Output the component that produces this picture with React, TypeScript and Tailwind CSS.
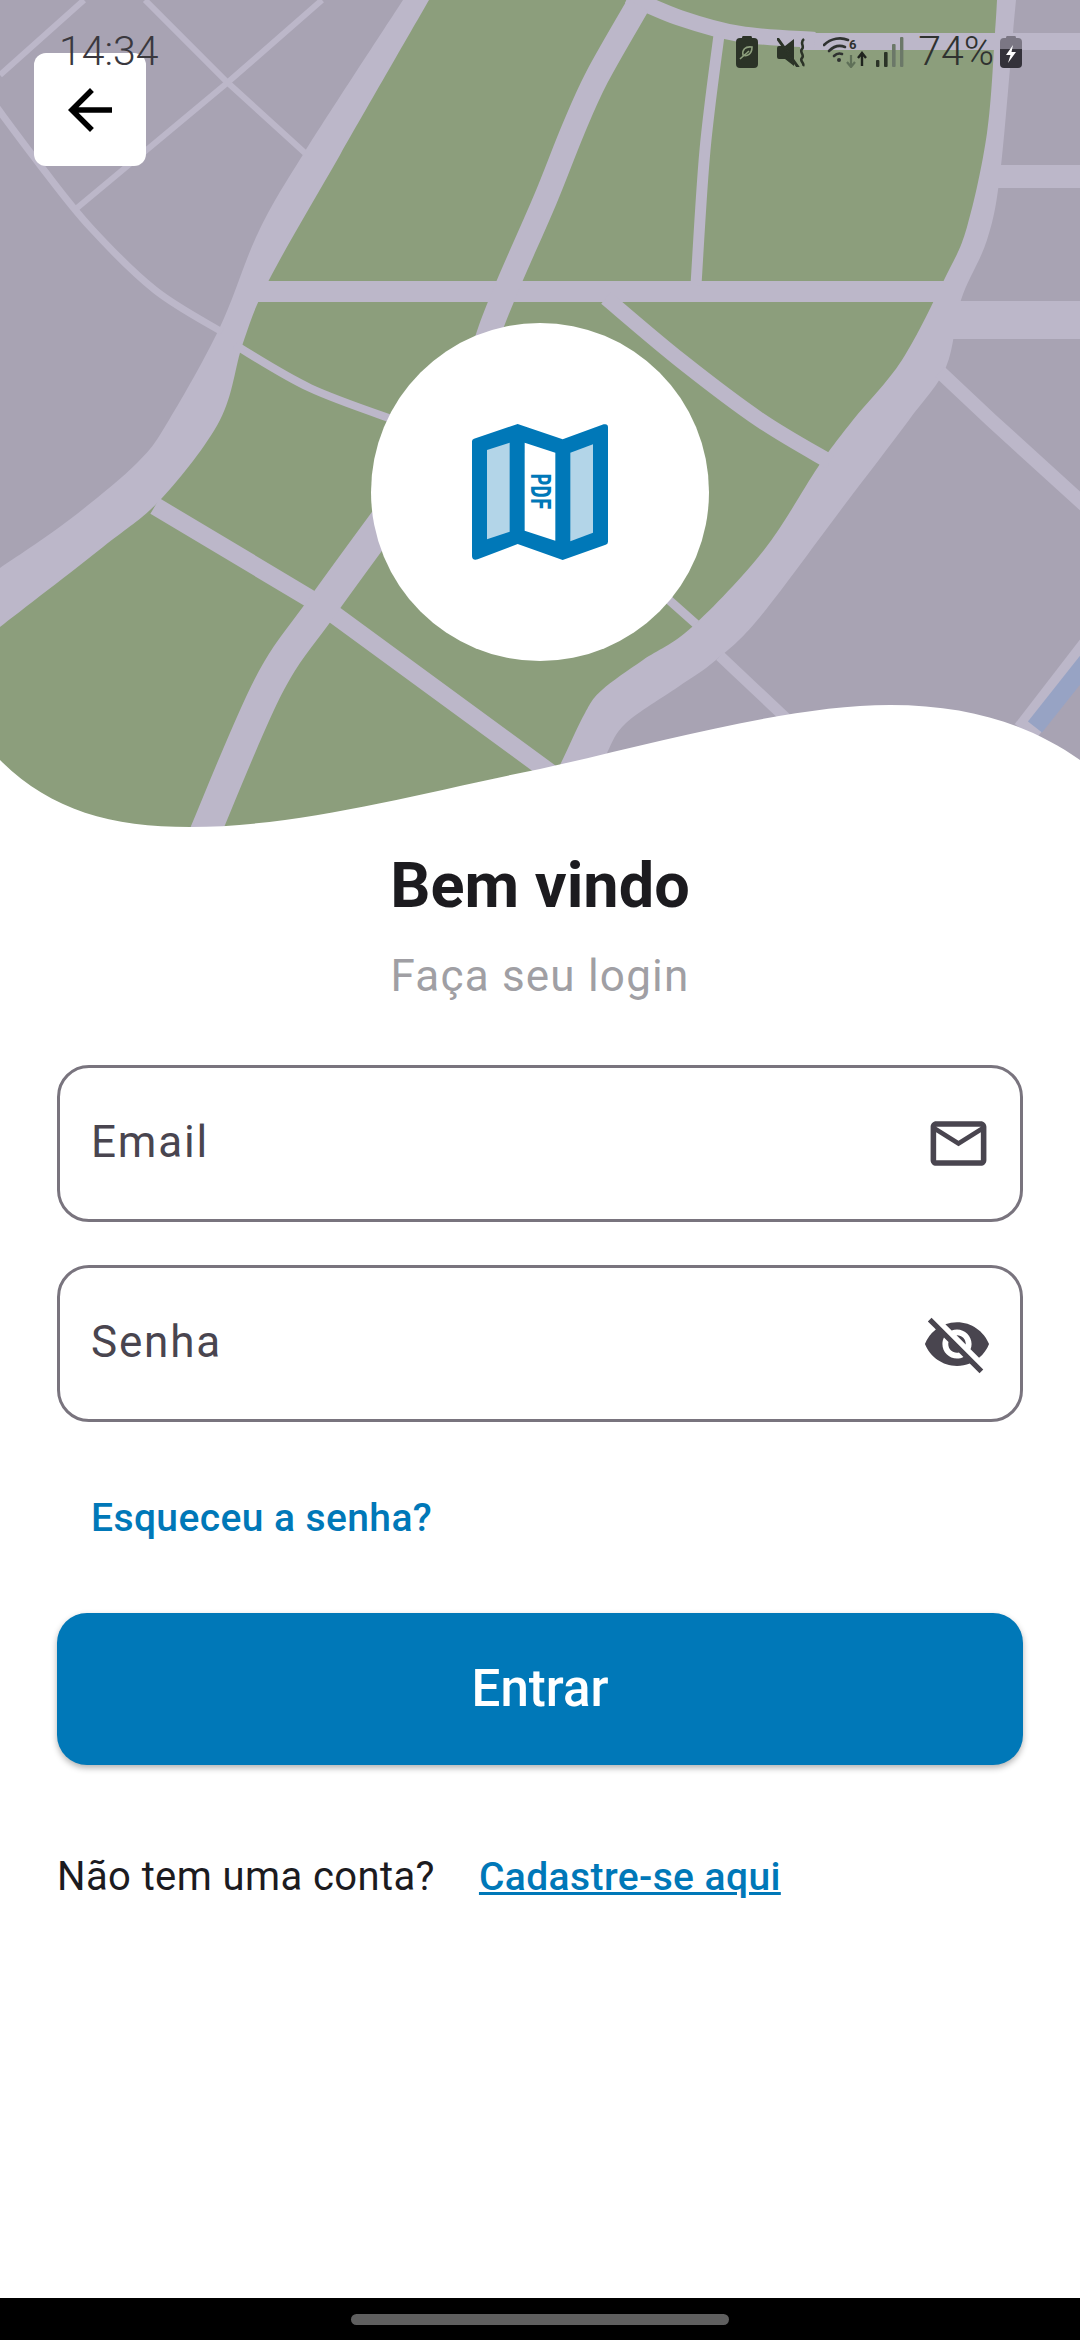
import { MdArrowBack, MdMailOutline, MdVisibilityOff } from 'react-icons/md';

const roboto = "font-['Roboto',sans-serif]";

type Pt = [number, number];

// catmull-rom through the points, so the road edges don't look faceted
function curve(pts: Pt[], cmd = 'M') {
  let d = `${cmd}${pts[0][0]} ${pts[0][1]}`;
  for (let i = 0; i < pts.length - 1; i++) {
    const p0 = pts[i - 1] ?? pts[i];
    const p1 = pts[i];
    const p2 = pts[i + 1];
    const p3 = pts[i + 2] ?? p2;
    const c1x = p1[0] + (p2[0] - p0[0]) / 6;
    const c1y = p1[1] + (p2[1] - p0[1]) / 6;
    const c2x = p2[0] - (p3[0] - p1[0]) / 6;
    const c2y = p2[1] - (p3[1] - p1[1]) / 6;
    d += ` C${c1x} ${c1y} ${c2x} ${c2y} ${p2[0]} ${p2[1]}`;
  }
  return d;
}

const leftRoadA: Pt[] = [[403, 0], [304, 153], [258, 233], [220, 327], [169, 420], [137, 463], [69, 520], [0, 568]];
const leftRoadB: Pt[] = [[0, 627], [103, 547], [162, 498], [220, 420], [243, 343], [269, 280], [340, 155], [429, 0]];
const rightRoadA: Pt[] = [[997, 0], [995, 33], [987, 133], [967, 227], [945, 278], [902, 360], [853, 420], [818, 467], [764, 550], [692, 627], [643, 660], [602, 690], [585, 713], [561, 763], [545, 795]];
const rightRoadB: Pt[] = [[590, 795], [607, 753], [626, 723], [678, 687], [716, 660], [760, 617], [843, 507], [909, 420], [946, 367], [961, 300], [987, 240], [1000, 175], [1013, 33], [1016, 0]];

function MapBackdrop() {
  return (
    <svg viewBox="0 0 1080 830" className="block w-[1080px] h-[830px]">
      <rect width="1080" height="830" fill="#a8a3b3" />
      {/* park area between the two main roads */}
      <path
        d="M416 0 L1006 0 L990 133 L975 235 L950 290 L880 405 L800 530 L725 625 L660 675 L610 705 L585 770 L560 830 L0 830 L0 597 L85 535 L150 480 L195 420 L230 335 L285 215 Z"
        fill="#8c9e7c"
      />
      <g fill="#bcb7c9">
        <path d={`${curve(leftRoadA)} ${curve(leftRoadB, 'L')} Z`} />
        <path d={`${curve(rightRoadA)} ${curve(rightRoadB, 'L')} Z`} />
        <rect x="255" y="281" width="690" height="21" />
        <rect x="945" y="301" width="135" height="38" />
        <rect x="990" y="165" width="90" height="23" />
        <rect x="800" y="33" width="280" height="17" />
      </g>
      <g fill="none" stroke="#bcb7c9" strokeLinecap="butt">
        <path d={curve([[628, -4], [680, 18], [740, 34], [815, 40]])} strokeWidth="16" />
        <path d={curve([[638, 5], [597, 77], [573, 130], [545, 200], [510, 280], [490, 330], [478, 370]])} strokeWidth="24" />
        <path d={curve([[719, 35], [705, 150], [696, 285]])} strokeWidth="11" />
        <path d={curve([[606, 298], [680, 360], [760, 420], [830, 462]])} strokeWidth="15" />
        <path d={curve([[235, 345], [310, 388], [400, 422]])} strokeWidth="8" />
        <path d="M155 506 L309 598 L336 616 L560 780" strokeWidth="18" />
        <path d={curve([[400, 500], [322, 607], [268, 687], [204, 835]])} strokeWidth="31" />
        <path d="M660 592 L696 624" strokeWidth="9" />
        <path d="M720 656 L790 722" strokeWidth="11" />
        <path d="M940 372 L991 420 L1090 510" strokeWidth="14" />
        <path d="M84 0 L0 75" strokeWidth="6" />
        <path d="M145 0 L227 82 L305 153" strokeWidth="6" />
        <path d="M322 0 L227 83 L77 208" strokeWidth="6" />
        <path d={curve([[-5, 105], [40, 165], [90, 227], [155, 290], [222, 332]])} strokeWidth="7" />
        <path d="M1025 732 L1096 640" strokeWidth="26" />
      </g>
      <path d="M1035 727 L1096 650" fill="none" stroke="#97a3c4" strokeWidth="18" />
      {/* white wave that cuts the map off */}
      <path
        d="M0 760 C 50 810, 110 827, 190 827 C 300 827, 420 793, 540 769 C 660 742, 790 705, 890 705 C 970 705, 1030 725, 1080 760 L1080 831 L0 831 Z"
        fill="#ffffff"
      />
    </svg>
  );
}

function PdfMapLogo() {
  return (
    <svg viewBox="95 72 408 408" className="w-[136px] h-[136px]">
      <path
        d="M101 116 L232 72 L367 118 L490 73 Q503 70 503 82 L503 425 Q503 432 496 434 L367 480 L232 432 L112 478 Q95 482 95 468 L95 124 Q95 118 101 116 Z"
        fill="#0078b8"
      />
      <path d="M140 150 L208 128 L208 395 L140 418 Z" fill="#b3d5e8" />
      <path d="M253 128 L345 158 L345 422 L253 392 Z" fill="#ffffff" />
      <path d="M390 158 L458 133 L458 398 L390 424 Z" fill="#b3d5e8" />
      <text
        x="0"
        y="0"
        transform="translate(272 220) rotate(90)"
        fontFamily="'DejaVu Sans Mono', monospace"
        fontSize="78"
        fontWeight="700"
        textLength="110"
        lengthAdjust="spacingAndGlyphs"
        fill="#0078b8"
      >
        PDF
      </text>
    </svg>
  );
}

function LeafBattery() {
  return (
    <svg viewBox="0 0 22 32" className="w-[22px] h-[32px]">
      <path d="M7 0 H15 Q16 0 16 2 H18 Q22 2 22 6 V28 Q22 32 18 32 H4 Q0 32 0 28 V6 Q0 2 4 2 H6 Q6 0 7 0 Z" fill="#2b3327" />
      <path d="M16 11 C 9 10, 6 14, 7 19 C 11 21, 16 18, 16 11 Z" fill="none" stroke="#8d9f7d" strokeWidth="1.6" />
      <path d="M4 23 C 7 20, 10 18, 13 15" fill="none" stroke="#8d9f7d" strokeWidth="1.6" />
    </svg>
  );
}

function MutedVibrate() {
  return (
    <svg viewBox="0 0 29 29" className="w-[29px] h-[29px]">
      <path d="M0 10 Q0 8 2 8 H8 L17 1 V28 L8 21 H2 Q0 21 0 19 Z" fill="#2b3327" />
      <path d="M0 -1 L20 28" stroke="#a4ab9a" strokeWidth="1.6" />
      <path d="M1 1 L21 29" stroke="#2b3327" strokeWidth="3" strokeLinecap="round" />
      <path d="M27 1 C 22 5, 28 8, 25 11 C 22 14, 28 17, 25 20 C 22 23, 28 25, 26 28" fill="none" stroke="#2b3327" strokeWidth="2.6" />
    </svg>
  );
}

function WifiSix() {
  return (
    <svg viewBox="0 0 44 32" className="w-[44px] h-[32px]">
      <g fill="none" stroke="#2f3230" strokeWidth="2.6" strokeLinecap="round">
        <path d="M1 9 C 8 2, 18 1, 25 4" />
        <path d="M6 15 C 11 10, 17 9, 22 11" />
        <path d="M11 20 C 13 18, 16 17, 19 18" />
      </g>
      <circle cx="16" cy="24" r="2" fill="#2f3230" />
      <text x="26" y="13" fontFamily="Roboto, sans-serif" fontSize="13" fontWeight="700" fill="#2f3230">
        6
      </text>
      <path d="M28 19 V30 M24 26 L28 31 L32 26" fill="none" stroke="#5f7058" strokeWidth="2.2" />
      <path d="M39 30 V18 M35 22 L39 17 L43 22" fill="none" stroke="#1f241e" strokeWidth="2.4" />
    </svg>
  );
}

function SignalBars() {
  return (
    <svg viewBox="0 0 28 30" className="w-[28px] h-[30px]">
      <rect x="0" y="23" width="3.4" height="7" rx="1" fill="#2b3327" />
      <rect x="8" y="15" width="3.6" height="15" rx="1" fill="#2b3327" />
      <rect x="16" y="7" width="3.6" height="23" rx="1" fill="#6b7868" />
      <rect x="24" y="0" width="3.4" height="30" rx="1" fill="#6b7868" />
    </svg>
  );
}

function ChargingBattery() {
  return (
    <svg viewBox="0 0 22 32" className="w-[22px] h-[32px]">
      <path d="M7 0 H15 Q16 0 16 2 H18 Q22 2 22 6 V14 H0 V6 Q0 2 4 2 H6 Q6 0 7 0 Z" fill="#7b7784" />
      <path d="M0 13 H22 V28 Q22 32 18 32 H4 Q0 32 0 28 Z" fill="#34323a" />
      <path d="M13 9 L6 19 H10.5 L8 27 L16 16 H11.5 Z" fill="#ffffff" />
    </svg>
  );
}

function StatusBar() {
  return (
    <div className={`absolute top-[25px] left-[59px] right-[58px] z-20 flex items-center justify-between h-[54px] text-[41px] text-[#3a383e] font-light ${roboto}`}>
      <span>14:34</span>
      <div className="flex items-center">
        <LeafBattery />
        <div className="ml-[19px]">
          <MutedVibrate />
        </div>
        <div className="ml-[17px]">
          <WifiSix />
        </div>
        <div className="ml-[9px]">
          <SignalBars />
        </div>
        <span className="ml-[14px] text-[#2f3230]">74%</span>
        <div className="ml-[6px]">
          <ChargingBattery />
        </div>
      </div>
    </div>
  );
}

function Field({ label, icon }: { label: string; icon: React.ReactNode }) {
  return (
    <div className="flex items-center justify-between h-[157px] rounded-[32px] border-[3px] border-[#79747e] pl-[31px] pr-[28px]">
      <span className="text-[44px] tracking-[1.8px] text-[#49454f] -mt-[3px]">{label}</span>
      {icon}
    </div>
  );
}

export default function App() {
  return (
    <div className={`flex flex-col w-[1080px] h-[2340px] bg-white ${roboto}`}>
      <div className="relative h-[830px] shrink-0">
        <MapBackdrop />
        <StatusBar />

        <button className="absolute top-[53px] left-[34px] z-10 flex items-center justify-center w-[112px] h-[113px] bg-white rounded-[12px]">
          <MdArrowBack className="w-[66px] h-[66px] text-black" />
        </button>

        <div className="absolute top-[323px] left-[371px] flex items-center justify-center w-[338px] h-[338px] rounded-full bg-white">
          <PdfMapLogo />
        </div>
      </div>

      <main className="flex-1 px-[57px]">
        <h1 className="mt-[20px] text-center text-[63px] leading-[72px] font-bold text-[#1c1b1f]">Bem vindo</h1>
        <p className="mt-[26px] text-center text-[44px] leading-[56px] tracking-[1.2px] text-[#a09fa4]">Faça seu login</p>

        <div className="mt-[61px] flex flex-col gap-[43px]">
          <Field label="Email" icon={<MdMailOutline className="w-[67px] h-[67px] text-[#49454f]" />} />
          <Field label="Senha" icon={<MdVisibilityOff className="w-[70px] h-[70px] text-[#49454f]" />} />
        </div>

        <a className="block mt-[71px] ml-[34px] text-[39px] leading-[50px] font-medium tracking-[0.4px] text-[#0078b8]">
          Esqueceu a senha?
        </a>

        <button className="mt-[70px] w-full h-[152px] rounded-[30px] bg-[#0078b8] text-white text-[51px] font-medium shadow-[0_3px_6px_rgba(0,0,0,0.3)]">
          Entrar
        </button>

        <div className="mt-[87px] flex items-center text-[40px] leading-[50px] tracking-[0.4px]">
          <span className="text-[#1c1b1f]">Não tem uma conta?</span>
          <a className="ml-[44px] text-[39px] font-medium text-[#0078b8] underline">Cadastre-se aqui</a>
        </div>
      </main>

      <div className="flex items-center justify-center h-[42px] shrink-0 bg-black">
        <div className="w-[378px] h-[11px] rounded-full bg-[#5f5f5f]" />
      </div>
    </div>
  );
}
